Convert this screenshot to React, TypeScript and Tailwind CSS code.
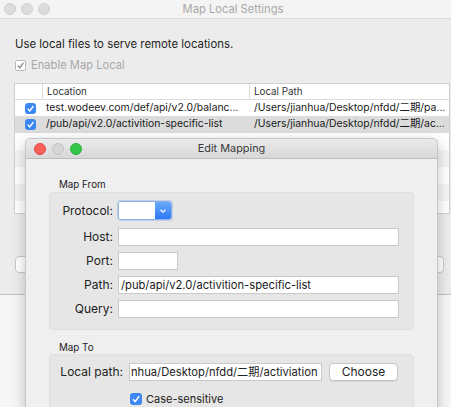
import React from "react";

const font = { fontFamily: "Inter, 'Noto Sans', 'Noto Sans CJK SC', sans-serif" };

function Check({ disabled = false, size = 11 }: { disabled?: boolean; size?: number }) {
  if (disabled) {
    return (
      <span className="inline-flex items-center justify-center w-[11px] h-[11px] rounded-[2px] border border-[#b9b9b9] bg-white shrink-0">
        <svg width="9" height="9" viewBox="0 0 10 10">
          <path d="M2 5.2 L4.2 7.5 L8.2 2" fill="none" stroke="#7a7a7a" strokeWidth="1.3" />
        </svg>
      </span>
    );
  }
  return (
    <span
      className="inline-flex items-center justify-center rounded-[3px] bg-[#3d87f5] shrink-0"
      style={{ width: size, height: size }}
    >
      <svg width={size - 2} height={size - 2} viewBox="0 0 10 10">
        <path d="M2 5.2 L4.2 7.6 L8.2 2.2" fill="none" stroke="#fff" strokeWidth="1.5" />
      </svg>
    </span>
  );
}

function Field({ w, text, className = "" }: { w: number; text?: string; className?: string }) {
  return (
    <div
      className={`h-[18px] bg-white border border-[#c9c9c9] flex items-center px-[2px] text-[11.2px] text-[#1a1a1a] whitespace-nowrap shrink-0 ${className}`}
      style={{ width: w }}
    >
      {text}
    </div>
  );
}

export default function App() {
  return (
    <div className="relative w-[451px] h-[407px] overflow-hidden bg-[#f6f6f6]" style={font}>
      {/* Background window */}
      <div className="w-[460px] h-[295px] bg-[#ececec] border-b border-[#c4c4c4] flex flex-col">
        <div className="h-[19px] shrink-0 flex items-center relative bg-[#f4f4f4] border-b border-[#dadada]">
          <div className="flex gap-[5px] pl-[4px]">
            <span className="w-[12px] h-[12px] rounded-full bg-[#dcdcdc] border border-[#d0d0d0]" />
            <span className="w-[12px] h-[12px] rounded-full bg-[#dcdcdc] border border-[#d0d0d0]" />
            <span className="w-[12px] h-[12px] rounded-full bg-[#dcdcdc] border border-[#d0d0d0]" />
          </div>
          <div className="absolute left-0 w-[466px] text-center text-[11.2px] text-[#a8a8a8]">Map Local Settings</div>
        </div>
        <div className="pl-[15px] pt-[17px] text-[11.4px] text-[#1e1e1e] leading-[16px]">
          Use local files to serve remote locations.
        </div>
        <div className="pl-[15px] pt-[5px] flex items-center gap-[5px] text-[11.2px] text-[#a9a9a9] leading-[16px]">
          <Check disabled />
          <span>Enable Map Local</span>
        </div>
        {/* table */}
        <div className="ml-[14px] mt-[10px] w-[436px] h-[131px] shrink-0 bg-white border border-[#d0d0d0] flex flex-col text-[10.4px] leading-none">
          <div className="h-[16px] shrink-0 flex items-center border-b border-[#dcdcdc] text-[9.8px] text-[#333]">
            <div className="w-[28px] h-full border-r border-[#dcdcdc]" />
            <div className="w-[207px] h-full border-r border-[#dcdcdc] flex items-center pl-[4px]">Location</div>
            <div className="flex-1 pl-[4px]">Local Path</div>
          </div>
          <div className="h-[16px] shrink-0 flex items-center text-[#1a1a1a]">
            <div className="w-[28px] flex justify-center pl-[2px]"><Check /></div>
            <div className="w-[207px] pl-[3px] whitespace-nowrap">test.wodeev.com/def/api/v2.0/balanc...</div>
            <div className="flex-1 pl-[4px] whitespace-nowrap">/Users/jianhua/Desktop/nfdd/二期/pa...</div>
          </div>
          <div className="h-[17px] shrink-0 flex items-center bg-[#dcdcdc] text-[#1a1a1a]">
            <div className="w-[28px] flex justify-center pl-[2px]"><Check /></div>
            <div className="w-[207px] pl-[3px] whitespace-nowrap">/pub/api/v2.0/activition-specific-list</div>
            <div className="flex-1 pl-[4px] whitespace-nowrap">/Users/jianhua/Desktop/nfdd/二期/ac...</div>
          </div>
          <div className="h-[17px] shrink-0" />
          <div className="h-[17px] shrink-0 bg-[#f4f4f4]" />
          <div className="h-[17px] shrink-0" />
          <div className="h-[17px] shrink-0 bg-[#f4f4f4]" />
          <div className="flex-1" />
        </div>
        <div className="mt-[42px] flex justify-between pl-[15px] pr-[16px]">
          <div className="w-[80px] h-[17px] bg-white border border-[#c8c8c8] rounded-[4px]" />
          <div className="w-[70px] h-[17px] bg-white border border-[#c8c8c8] rounded-[4px]" />
        </div>
      </div>

      {/* Edit Mapping dialog */}
      <div className="absolute left-[25px] top-[138px] w-[413px] h-[290px] bg-[#efefef] border border-[#c6c6c6] rounded-t-[5px] shadow-[0_4px_14px_rgba(0,0,0,0.22)] flex flex-col">
        <div className="h-[20px] shrink-0 relative flex items-center rounded-t-[5px] bg-gradient-to-b from-[#ebebeb] to-[#d8d8d8] border-b border-[#bdbdbd]">
          <div className="flex gap-[6px] pl-[8px]">
            <span className="w-[12px] h-[12px] rounded-full bg-[#fc605c] border border-[#e2463f]" />
            <span className="w-[12px] h-[12px] rounded-full bg-[#d6d6d6] border border-[#c4c4c4]" />
            <span className="w-[12px] h-[12px] rounded-full bg-[#34c84a] border border-[#2aac3a]" />
          </div>
          <div className="absolute inset-x-0 text-center text-[10.9px] text-[#3a3a3a]">Edit Mapping</div>
        </div>

        <div className="shrink-0 pl-[33px] pt-[19px] text-[9.8px] text-[#222] leading-[14px]">Map From</div>
        <div className="shrink-0 ml-[23px] mt-[0px] w-[365px] h-[138px] bg-[#e6e6e6] border border-[#dedede] rounded-[4px] pt-[8px] flex flex-col gap-[6px] text-[12px] text-[#222]">
          <div className="flex items-center h-[19px] mb-[2px]">
            <div className="w-[63px] text-right">Protocol:</div>
            <div className="ml-[5px] w-[54px] h-[19px] flex rounded-[3px] border border-[#8fb2e8] shadow-[0_0_0_1px_rgba(120,160,230,0.35)] overflow-hidden">
              <div className="flex-1 bg-white" />
              <div className="w-[16px] bg-gradient-to-b from-[#6aa8fb] to-[#2a7af4] flex items-center justify-center">
                <svg width="8" height="6" viewBox="0 0 8 6">
                  <path d="M1.5 1.8 L4 4.2 L6.5 1.8" fill="none" stroke="#fff" strokeWidth="1.2" />
                </svg>
              </div>
            </div>
          </div>
          <div className="flex items-center">
            <div className="w-[63px] text-right">Host:</div>
            <Field w={281} className="ml-[5px]" />
          </div>
          <div className="flex items-center">
            <div className="w-[63px] text-right">Port:</div>
            <Field w={60} className="ml-[5px]" />
          </div>
          <div className="flex items-center">
            <div className="w-[63px] text-right">Path:</div>
            <Field w={281} className="ml-[5px]" text="/pub/api/v2.0/activition-specific-list" />
          </div>
          <div className="flex items-center">
            <div className="w-[63px] text-right">Query:</div>
            <Field w={281} className="ml-[5px]" />
          </div>
        </div>

        <div className="shrink-0 pl-[33px] pt-[12px] text-[9.8px] text-[#222] leading-[12px]">Map To</div>
        <div className="shrink-0 ml-[23px] mt-[0px] w-[365px] h-[80px] bg-[#e6e6e6] border border-[#dedede] rounded-[4px] pt-[8px] text-[12px] text-[#222]">
          <div className="flex items-center">
            <div className="w-[73px] text-right">Local path:</div>
            <div className="ml-[6px] w-[193px] h-[18px] bg-white border border-[#c9c9c9] flex items-center pl-[1px] whitespace-nowrap text-[11.2px]">
              <span>nhua/Desktop/nfdd/二期/activiation</span>
            </div>
            <div className="ml-[7px] w-[69px] h-[18px] bg-white border border-[#c6c6c6] rounded-[4px] shadow-[0_1px_0_rgba(0,0,0,0.08)] flex items-center justify-center">
              Choose
            </div>
          </div>
          <div className="mt-[10px] ml-[80px] flex items-center gap-[4px] text-[11px]">
            <Check size={12} />
            <span>Case-sensitive</span>
          </div>
        </div>
      </div>
    </div>
  );
}
